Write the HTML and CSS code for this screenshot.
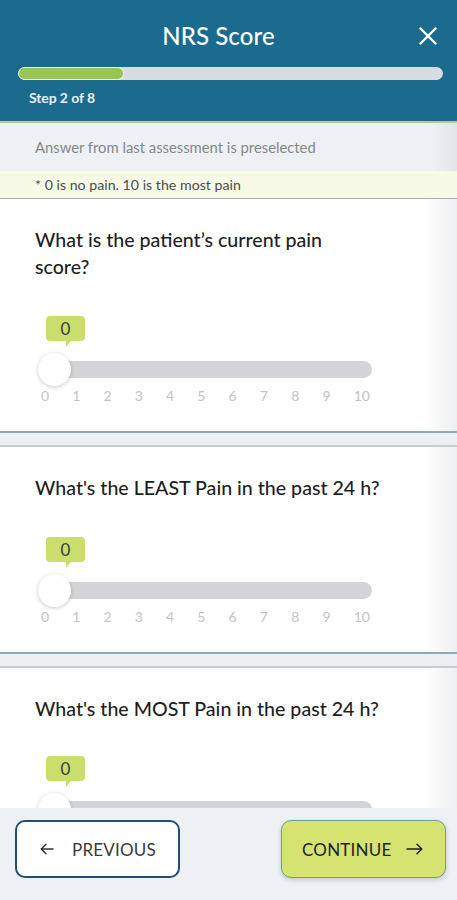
FILE: index.html
```html
<!DOCTYPE html>
<html>
<head>
<meta charset="utf-8">
<link rel="stylesheet" href="styles.css">
</head>
<body>
<div class="app">
  <header class="header">
    <div class="title-row">
      <h1 class="title">NRS Score</h1>
      <button class="close" aria-label="Close">
        <svg width="20" height="20" viewBox="0 0 20 20"><path d="M2.5 2.5 L17.5 17.5 M17.5 2.5 L2.5 17.5" stroke="#fff" stroke-width="2.4" stroke-linecap="round" fill="none"/></svg>
      </button>
    </div>
    <div class="progress"><div class="progress-fill" style="width:25%"></div></div>
    <div class="step">Step 2 of 8</div>
  </header>
  <main class="content">
    <div class="info">Answer from last assessment is preselected</div>
    <div class="note">* 0 is no pain. 10 is the most pain</div>

    <section class="card card-tall">
      <h2 class="question q-wrap">What is the patient’s current pain score?</h2>
      <div class="slider">
        <div class="bubble">0</div>
        <div class="track"><div class="thumb"></div></div>
        <div class="ticks"><span>0</span><span>1</span><span>2</span><span>3</span><span>4</span><span>5</span><span>6</span><span>7</span><span>8</span><span>9</span><span>10</span></div>
      </div>
    </section>
    <div class="sep"></div>
    <section class="card">
      <h2 class="question">What's the LEAST Pain in the past 24 h?</h2>
      <div class="slider">
        <div class="bubble">0</div>
        <div class="track"><div class="thumb"></div></div>
        <div class="ticks"><span>0</span><span>1</span><span>2</span><span>3</span><span>4</span><span>5</span><span>6</span><span>7</span><span>8</span><span>9</span><span>10</span></div>
      </div>
    </section>
    <div class="sep"></div>
    <section class="card">
      <h2 class="question">What's the MOST Pain in the past 24 h?</h2>
      <div class="slider slider-last">
        <div class="bubble">0</div>
        <div class="track"><div class="thumb"></div></div>
      </div>
    </section>
  </main>

  <footer class="footer">
    <button class="btn btn-prev">
      <svg width="14" height="12" viewBox="0 0 14 12"><path d="M13 6 H1.5 M6 1.2 L1.2 6 L6 10.8" stroke="#333" stroke-width="1.5" fill="none" stroke-linecap="round" stroke-linejoin="round"/></svg>
      <span>PREVIOUS</span>
    </button>
    <button class="btn btn-next">
      <span>CONTINUE</span>
      <svg width="17" height="12" viewBox="0 0 17 12"><path d="M1 6 H15.5 M11 1.2 L15.8 6 L11 10.8" stroke="#222" stroke-width="1.5" fill="none" stroke-linecap="round" stroke-linejoin="round"/></svg>
    </button>
  </footer>
</div>
</body>
</html>
```

FILE: styles.css
```css
* { box-sizing: border-box; }
html, body { margin: 0; padding: 0; }
body {
  font-family: Lato, "Open Sans", "Liberation Sans", sans-serif;
  background: #ffffff;
  width: 457px;
  height: 900px;
  overflow: hidden;
}
.app {
  height: 900px;
  display: flex;
  flex-direction: column;
  overflow: hidden;
}

.header {
  flex: none;
  background: #1b6b8f;
  height: 123px;
  padding: 16px 14px 0 18px;
  border-bottom: 2px solid #a9d08c;
  color: #fff;
}
.title-row {
  position: relative;
  display: flex;
  justify-content: center;
  align-items: center;
  height: 40px;
  padding-right: 24px;
}
.title {
  margin: 0;
  font-size: 24px;
  font-weight: 500;
  line-height: 40px;
  color: #fff;
  letter-spacing: 0.1px;
}
.close {
  position: absolute;
  right: 5px;
  top: 10px;
  background: none;
  border: 0;
  padding: 0;
  width: 20px;
  height: 20px;
}
.progress {
  margin-top: 11px;
  height: 13px;
  background: #d9dbdf;
  border-radius: 7px;
  width: 425px;
  overflow: hidden;
}
.progress-fill {
  height: 13px;
  background: #9cc453;
  border: 1.5px solid #eef4e2;
  border-radius: 7px;
}
.step {
  margin-top: 9px;
  margin-left: 11px;
  font-size: 14px;
  font-weight: 700;
  line-height: 18px;
  color: #e8f1f5;
  letter-spacing: -0.1px;
}

.content {
  flex: 1;
  overflow: hidden;
  min-height: 0;
}
.info {
  background: linear-gradient(to right, #eef1f3 0, #eef1f3 430px, #e3e6e8 457px);
  height: 48px;
  padding-left: 35px;
  display: flex;
  align-items: center;
  font-size: 14.8px;
  color: #84888b;
}
.note {
  background: #f7fae7;
  height: 28px;
  padding-left: 35px;
  display: flex;
  align-items: center;
  font-size: 14.2px;
  color: #4a4c4e;
  border-bottom: 1px solid #a8abae;
}

.card {
  background: linear-gradient(to right, #ffffff 0, #ffffff 425px, #eeeff0 457px);
  padding: 27px 0 0 35px;
}
.card-tall { height: 232px; }
.question {
  margin: 0;
  font-size: 19.6px;
  font-weight: 500;
  line-height: 27px;
  color: #1f1f1f;
}
.q-wrap { max-width: 320px; }

.slider {
  position: relative;
  width: 337px;
  margin-left: 5px;
  padding-top: 36px;
  padding-bottom: 26px;
}
.slider-last { padding-top: 34px; }
.bubble {
  position: relative;
  margin-left: 6px;
  width: 39px;
  height: 25px;
  background: #c9de6c;
  border-radius: 4px;
  font-size: 17px;
  line-height: 25px;
  text-align: center;
  color: #3c3c3c;
}
.bubble::after {
  content: "";
  position: absolute;
  left: 20px;
  bottom: -6px;
  border-left: 5px solid #c9de6c;
  border-bottom: 6px solid transparent;
}
.track {
  position: relative;
  margin-top: 20px;
  height: 17px;
  width: 332px;
  background: #d3d4d7;
  border-radius: 9px;
}
.thumb {
  position: absolute;
  left: -2px;
  top: -8px;
  width: 33px;
  height: 33px;
  border-radius: 50%;
  background: #fff;
  box-shadow: 0 1px 4px rgba(0,0,0,0.22);
}
.ticks {
  display: flex;
  justify-content: space-between;
  margin-top: 9px;
  margin-left: 1px;
  width: 329px;
  font-size: 14px;
  line-height: 18px;
  color: #c2c4c6;
}

.sep {
  height: 16px;
  background: #ecf0f2;
  border-top: 2px solid #8eaab3;
  border-bottom: 2px solid #c6cdd0;
}

.footer {
  flex: none;
  height: 92px;
  background: #eef1f4;
  display: flex;
  justify-content: space-between;
  padding: 12px 11px 0 15px;
}
.btn {
  height: 58px;
  border-radius: 10px;
  display: flex;
  align-items: center;
  font-family: Lato, "Open Sans", sans-serif;
  font-size: 17px;
  letter-spacing: 0.2px;
  padding: 0;
}
.btn-prev {
  width: 165px;
  background: #fff;
  border: 2px solid #244c79;
  color: #3a3a3a;
  padding-left: 23px;
  gap: 18px;
}
.btn-next {
  width: 165px;
  background: #d5e471;
  border: 1.5px solid #6f9c97;
  color: #1f1f1f;
  padding-left: 20px;
  gap: 15px;
  box-shadow: 0 2px 5px rgba(0,0,0,0.18);
}
```
